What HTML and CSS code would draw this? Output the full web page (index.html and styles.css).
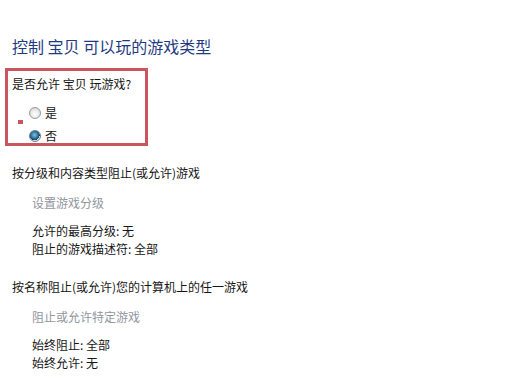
FILE: index.html
```html
<!DOCTYPE html>
<html lang="zh-CN">
<head>
<meta charset="utf-8">
<link rel="stylesheet" href="styles.css">
</head>
<body>
<div class="page">
  <h1 class="title">控制 宝贝 可以玩的游戏类型</h1>

  <div class="allow-box">
    <span class="marker"></span>
    <p class="question">是否允许 宝贝 玩游戏?</p>
    <div class="radio-row"><span class="radio"></span><span class="radio-label">是</span></div>
    <div class="radio-row"><span class="radio checked"></span><span class="radio-label">否</span></div>
  </div>

  <p class="section-head first">按分级和内容类型阻止(或允许)游戏</p>
  <p class="sub-link">设置游戏分级</p>
  <div class="details">
    <p>允许的最高分级: 无</p>
    <p>阻止的游戏描述符: 全部</p>
  </div>

  <p class="section-head second">按名称阻止(或允许)您的计算机上的任一游戏</p>
  <p class="sub-link">阻止或允许特定游戏</p>
  <div class="details">
    <p>始终阻止: 全部</p>
    <p>始终允许: 无</p>
  </div>
</div>
</body>
</html>
```

FILE: styles.css
```css
html, body {
  margin: 0;
  padding: 0;
  background: #ffffff;
}

body {
  width: 512px;
  height: 380px;
  overflow: hidden;
  font-family: "Noto Sans CJK SC", "Microsoft YaHei", sans-serif;
  font-size: 12px;
  color: #161616;
}

p {
  margin: 0;
  line-height: 18px;
}

.page {
  padding: 36px 0 0 12px;
}

.title {
  margin: 0;
  font-size: 16px;
  font-weight: normal;
  line-height: 20px;
  color: #1f3b80;
}

.allow-box {
  position: relative;
  box-sizing: border-box;
  width: 143px;
  height: 78px;
  margin: 12px 0 0 -7px;
  padding: 4px 0 0 4px;
  border: 3px solid #c9565c;
}

.marker {
  position: absolute;
  left: 10px;
  top: 49px;
  width: 5px;
  height: 4px;
  background: #c9565c;
}

.question {
  line-height: 18px;
}

.radio-row {
  display: flex;
  align-items: center;
  gap: 4px;
  height: 23px;
  padding-left: 17px;
}

.question + .radio-row {
  margin-top: 8px;
}

.radio {
  box-sizing: border-box;
  width: 12px;
  height: 12px;
  border-radius: 50%;
  border: 1px solid #9a9a9a;
  background: radial-gradient(circle at 50% 60%, #ffffff 0%, #ececec 45%, #c9c9c9 100%);
}

.radio.checked {
  border-color: #6b7f8c;
  background:
    radial-gradient(circle at 45% 40%, #7fc4e6 0%, #2a6f95 45%, #123a55 62%, transparent 64%),
    radial-gradient(circle, #ffffff 0%, #e4e4e4 70%, #c8c8c8 100%);
}

.radio-label {
  font-size: 12px;
  line-height: 18px;
}

.section-head.first {
  margin-top: 18px;
}

.section-head.second {
  margin-top: 20px;
}

.sub-link {
  margin: 12px 0 0 20px;
  color: #9196a0;
}

.details {
  margin: 10px 0 0 20px;
}
```
